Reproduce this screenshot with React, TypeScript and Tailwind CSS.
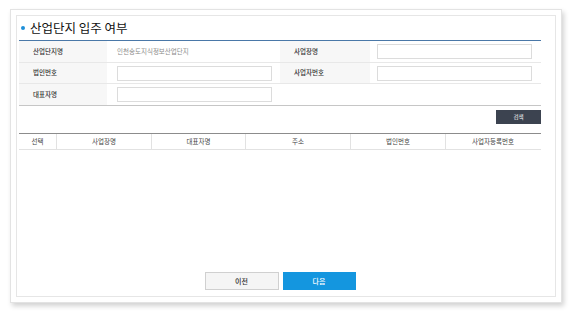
import React from "react";

const font = "font-['Noto_Sans_CJK_KR','Noto_Sans',sans-serif]";

function Label({ children }: { children: React.ReactNode }) {
  return (
    <div className="flex items-center bg-[#f7f7f7] pl-[14px] text-[6.5px] font-medium text-[#333]">
      {children}
    </div>
  );
}

function Field({ ml = "ml-[10px]" }: { ml?: string }) {
  return (
    <div className="flex items-center">
      <div className={`${ml} h-[15px] w-[155px] border border-[#dcdcdc] bg-white`} />
    </div>
  );
}

const columns = [
  { label: "선택", w: "w-[38px]" },
  { label: "사업장명", w: "w-[95px]" },
  { label: "대표자명", w: "w-[94px]" },
  { label: "주소", w: "w-[105px]" },
  { label: "법인번호", w: "w-[95px]" },
  { label: "사업자등록번호", w: "w-[94px]" },
];

export default function App() {
  return (
    <div className={`h-[313px] w-[572px] bg-white pl-[10px] pt-[9px] ${font}`}>
      <div className="h-[294px] w-[552px] border border-[#e3e3e3] bg-white p-[5px] shadow-[2px_3px_5px_rgba(0,0,0,0.18)]">
        <div className="flex h-full flex-col border border-[#e6e6e6] pl-[2px] pr-[14px]">
          {/* Title */}
          <div className="flex h-[24px] items-center">
            <span className="ml-[2px] h-[4px] w-[4px] rounded-full bg-[#1e8fd8]" />
            <h2 className="ml-[5px] text-[12.5px] font-normal leading-none text-[#111]">산업단지 입주 여부</h2>
          </div>

          {/* Search form */}
          <div className="border-t border-[#4a78a8]">
            <div className="grid h-[22px] grid-cols-[88px_173px_90px_170px] border-b border-[#e8e8e8]">
              <Label>산업단지명</Label>
              <div className="flex items-center pl-[10px] text-[6.5px] text-[#8a8a8a]">인천송도지식정보산업단지</div>
              <Label>사업장명</Label>
              <Field ml="ml-[7px]" />
            </div>
            <div className="grid h-[21px] grid-cols-[88px_173px_90px_170px] border-b border-[#e8e8e8]">
              <Label>법인번호</Label>
              <Field />
              <Label>사업자번호</Label>
              <Field ml="ml-[7px]" />
            </div>
            <div className="grid h-[22px] grid-cols-[88px_173px_90px_170px] border-b border-[#c6c6c6]">
              <Label>대표자명</Label>
              <Field />
              <div />
              <div />
            </div>
          </div>

          <div className="mt-[4px] flex justify-end">
            <button className="flex h-[14px] w-[45px] items-center justify-center bg-[#3c4350] text-[5.5px] text-white">
              검색
            </button>
          </div>

          {/* Result grid */}
          <div className="mt-[9px] flex h-[17px] border-b border-t border-b-[#e2e2e2] border-t-[#8c8c8c]">
            {columns.map((c, i) => (
              <div
                key={c.label}
                className={`${c.w} flex items-center justify-center text-[6.5px] text-[#444] ${
                  i < columns.length - 1 ? "border-r border-[#e2e2e2]" : ""
                }`}
              >
                {c.label}
              </div>
            ))}
          </div>

          <div className="flex-1" />

          <div className="mb-[6px] flex justify-center gap-[4px]">
            <button className="flex h-[18px] w-[74px] items-center justify-center border border-[#d0d0d0] bg-[#f5f5f5] text-[7px] font-medium text-[#333]">
              이전
            </button>
            <button className="flex h-[18px] w-[73px] items-center justify-center bg-[#1496df] text-[7px] font-medium text-white">
              다음
            </button>
          </div>
        </div>
      </div>
    </div>
  );
}
